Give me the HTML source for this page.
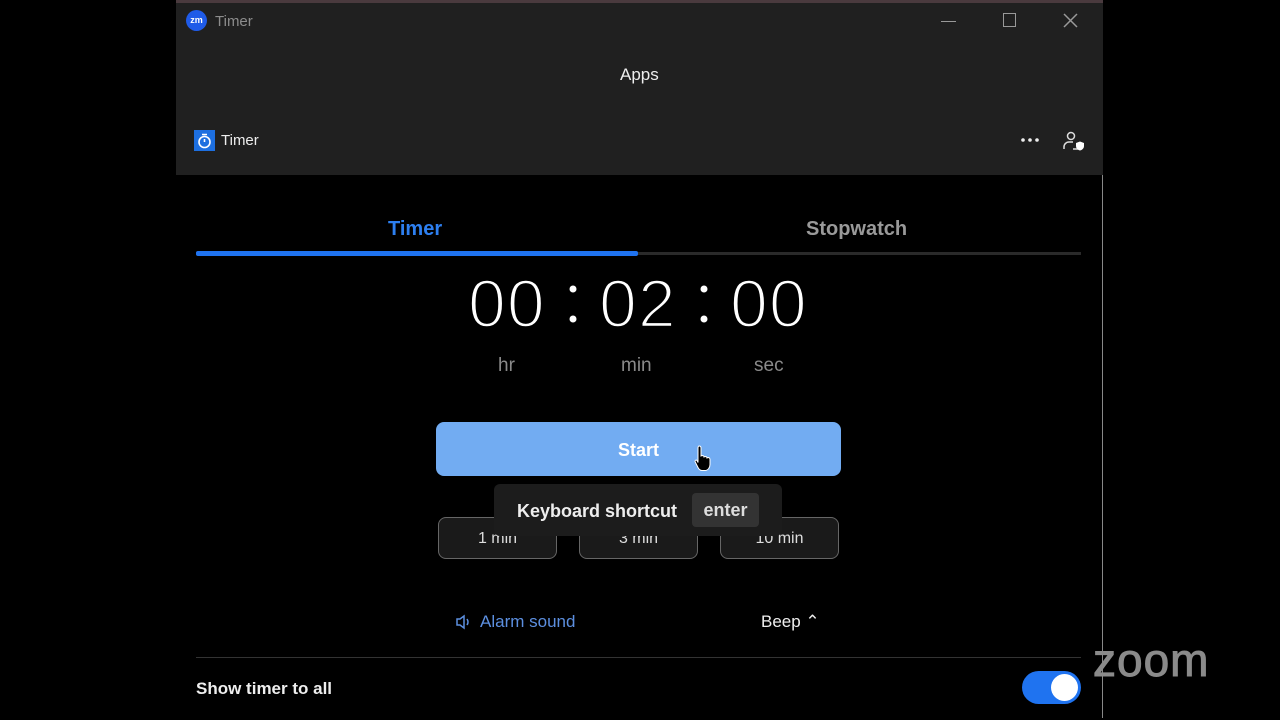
<!DOCTYPE html>
<html><head><meta charset="utf-8"><style>
*{margin:0;padding:0;box-sizing:border-box}
body{width:1280px;height:720px;background:#000;position:relative;overflow:hidden;font-family:"Liberation Sans",sans-serif;color:#fff}
.abs{position:absolute}
#win{left:176px;top:2px;width:927px;height:716px;background:#000;border-right:1px solid #888}
#hdr{left:176px;top:2px;width:927px;height:173px;background:#202020}
.t{white-space:nowrap}
.dig{font-size:68px;font-weight:normal;color:#fff;top:265px;-webkit-text-stroke:2.4px #000;paint-order:normal;letter-spacing:1px}
.lab{font-size:19px;color:#8a8a8a;top:355px}
.pb{top:517px;width:119px;height:42px;border:1px solid #666;border-radius:8px;background:#1a1a1a;font-size:16px;text-align:center;line-height:42px;color:#ddd}
</style></head><body>
<div id="win" class="abs"></div>
<div id="hdr" class="abs"></div>
<div class="abs" style="left:176px;top:0;width:927px;height:3px;background:#4a3a3e"></div>
<div class="abs" style="left:186px;top:10px;width:21px;height:21px;border-radius:50%;background:#1f5be8;font-size:9px;font-weight:bold;text-align:center;line-height:21px">zm</div>
<div class="abs t" style="left:215px;top:13px;font-size:15px;color:#8c8c8c">Timer</div>
<div class="abs" style="left:941px;top:21px;width:15px;height:1px;background:#999"></div>
<div class="abs" style="left:1003px;top:13px;width:13px;height:14px;border:1.5px solid #999"></div>
<svg class="abs" style="left:1063px;top:13px" width="15" height="15"><path d="M1 1L14 14M14 1L1 14" stroke="#999" stroke-width="1.5"/></svg>
<div class="abs t" style="left:620px;top:65px;font-size:17px;color:#eee">Apps</div>
<div class="abs" style="left:194px;top:130px;width:21px;height:21px;background:#1d6fe0"></div>
<svg class="abs" style="left:194px;top:130px" width="21" height="21"><circle cx="10.5" cy="12" r="5.5" fill="none" stroke="#fff" stroke-width="1.6"/><path d="M8 4.5h5M10.5 12V9" stroke="#fff" stroke-width="1.6"/></svg>
<div class="abs t" style="left:221px;top:132px;font-size:15px;color:#eee">Timer</div>
<svg class="abs" style="left:1020px;top:137px" width="20" height="6"><circle cx="3" cy="3" r="1.8" fill="#eee"/><circle cx="10" cy="3" r="1.8" fill="#eee"/><circle cx="17" cy="3" r="1.8" fill="#eee"/></svg>
<svg class="abs" style="left:1061px;top:129px" width="24" height="24"><circle cx="10" cy="7" r="3.5" fill="none" stroke="#ddd" stroke-width="1.5"/><path d="M3 20v-2a5 5 0 0 1 5-5h4" fill="none" stroke="#ddd" stroke-width="1.5"/><path d="M12 20h5" stroke="#ddd" stroke-width="1.5"/><path d="M15 14l4-1.5 4 1.5v3c0 2.5-2 4-4 4.5-2-.5-4-2-4-4.5z" fill="#fff"/></svg>
<div class="abs t" style="left:388px;top:218px;font-size:20px;font-weight:bold;color:#2d7ff0">Timer</div>
<div class="abs t" style="left:806px;top:218px;font-size:20px;font-weight:bold;color:#999">Stopwatch</div>
<div class="abs" style="left:196px;top:252px;width:885px;height:3px;background:#2a2a2a"></div>
<div class="abs" style="left:196px;top:251px;width:442px;height:5px;background:#1f73f0;border-radius:2px"></div>
<div class="abs t dig" style="left:468px">00</div>
<svg class="abs" style="left:566px;top:282px" width="14" height="44"><circle cx="7" cy="7" r="3.5" fill="#fff"/><circle cx="7" cy="37" r="3.5" fill="#fff"/></svg>
<div class="abs t dig" style="left:599px">02</div>
<svg class="abs" style="left:697px;top:282px" width="14" height="44"><circle cx="7" cy="7" r="3.5" fill="#fff"/><circle cx="7" cy="37" r="3.5" fill="#fff"/></svg>
<div class="abs t dig" style="left:730px">00</div>
<div class="abs t lab" style="left:498px">hr</div>
<div class="abs t lab" style="left:621px">min</div>
<div class="abs t lab" style="left:754px">sec</div>
<div class="abs" style="left:436px;top:422px;width:405px;height:54px;border-radius:8px;background:#72acf2;text-align:center;line-height:56px;font-size:18px;font-weight:bold;color:#fff">Start</div>
<svg class="abs" style="left:694px;top:444px" width="20" height="28"><path d="M5 2c1.5 0 2 1 2 2v8l1-.5c1 0 2 .5 2 1.5l1-.5c1 0 2 .5 2 1.5l1-.5c1 0 2 .8 2 2v5c0 3-2 6-5 6H8c-2 0-3-1-4-3l-3-6c0-1 1-2 2-1l1 2V4c0-1 .5-2 1-2z" fill="#000" stroke="#fff" stroke-width="1"/></svg>
<div class="abs pb" style="left:438px">1 min</div>
<div class="abs pb" style="left:579px">3 min</div>
<div class="abs pb" style="left:720px">10 min</div>
<div class="abs" style="left:494px;top:484px;width:288px;height:52px;background:#1c1c1c;border-radius:6px"></div>
<div class="abs t" style="left:517px;top:501px;font-size:18px;font-weight:bold;color:#eee">Keyboard shortcut</div>
<div class="abs t" style="left:692px;top:493px;width:67px;height:34px;background:#333;border-radius:4px;text-align:center;line-height:34px;font-size:18px;font-weight:bold;color:#ddd">enter</div>
<svg class="abs" style="left:455px;top:614px" width="20" height="16"><path d="M2 5h3l4-3v12l-4-3H2z" fill="none" stroke="#5c8fe0" stroke-width="1.5"/><path d="M12 5q2 3 0 6" fill="none" stroke="#5c8fe0" stroke-width="1.5"/></svg>
<div class="abs t" style="left:480px;top:612px;font-size:17px;color:#5c8fe0">Alarm sound</div>
<div class="abs t" style="left:761px;top:612px;font-size:17px;color:#eee">Beep ⌃</div>
<div class="abs" style="left:196px;top:657px;width:885px;height:1px;background:#333"></div>
<div class="abs t" style="left:196px;top:679px;font-size:17px;font-weight:bold;color:#eee">Show timer to all</div>
<div class="abs" style="left:1022px;top:671px;width:59px;height:33px;border-radius:17px;background:#1f73f0"></div>
<div class="abs" style="left:1051px;top:674px;width:27px;height:27px;border-radius:50%;background:#fff"></div>
<div class="abs t" style="left:1093px;top:633px;font-size:46px;color:#8a8a8a;letter-spacing:1px;-webkit-text-stroke:1px #8a8a8a">zoom</div>
</body></html>
